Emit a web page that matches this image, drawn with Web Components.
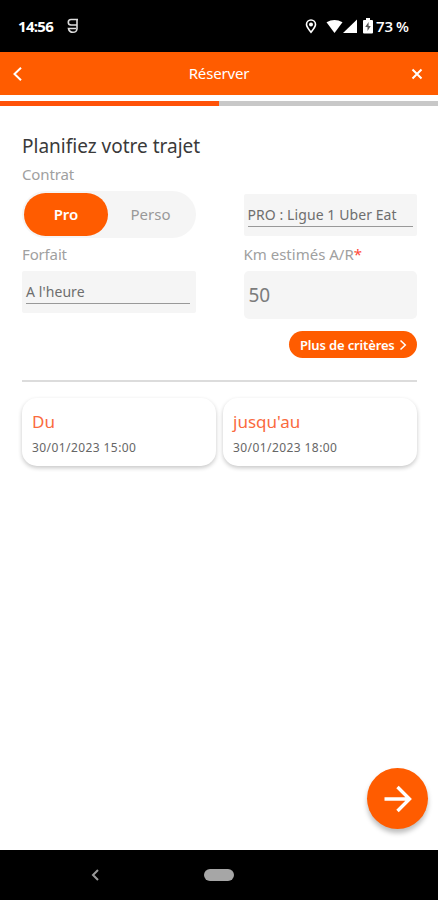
<!DOCTYPE html>
<html lang="fr">
<head>
<meta charset="utf-8">
<meta name="viewport" content="width=device-width, initial-scale=1">
<title>Réserver</title>
<style>
  body {
    margin: 0;
    background: #fff;
    font-family: "Noto Sans", "Open Sans", sans-serif;
    --orange: #ff5c00;
    --field: #f5f5f5;
    --label: #a0a0a0;
  }
</style>
</head>
<body>
<booking-app></booking-app>

<script>
const define = (name, html, setup) => {
  const $template = document.createElement("template");
  $template.innerHTML = html;
  window.customElements.define(name, class extends HTMLElement {
    constructor() {
      super();
      this.attachShadow({ mode: "open" });
      this.shadowRoot.appendChild($template.content.cloneNode(true));
    }
    connectedCallback() {
      if (setup) setup(this, this.shadowRoot);
    }
  });
};

// Android status bar
define("status-bar", /*html*/ `
  <style>
    :host {
      display: flex;
      align-items: center;
      box-sizing: border-box;
      height: 52px;
      padding: 0 29px 0 18px;
      background: #000;
      color: #fff;
      font: 700 15px/20px "Open Sans", sans-serif;
    }
    svg { display: block; fill: #fff; }
    .time { width: 37px; letter-spacing: -0.7px; white-space: nowrap; }
    .app { margin-left: 12px; }
    .right { display: flex; align-items: center; margin-left: auto; }
    .battery { font-weight: 600; white-space: nowrap; word-spacing: -1px; letter-spacing: 0; margin-left: 3px; }
  </style>
  <span class="time">14:56</span>
  <svg class="app" width="12" height="16" viewBox="0 0 12 16" style="fill:none;stroke:#ddd;stroke-width:1.6">
    <path d="M11 1.500H4Q1.300 1.500 1.300 4.200T4 7H10.500M10 1.500V11Q9.500 14.300 6 14.300Q2.200 14.300 1.500 10.500H9"/>
  </svg>
  <div class="right">
    <svg width="12" height="15" viewBox="0 0 12 15" style="fill:none;stroke:#fff;stroke-width:1.6">
      <path d="M6 13.2C3.4 10 1.5 7.8 1.5 5.5a4.5 4.5 0 0 1 9 0C10.500 7.800 8.600 10 6 13.200Z"/>
      <circle cx="6" cy="5.500" r="1.200" style="fill:#fff"/>
    </svg>
    <svg width="17" height="15" viewBox="0 0 17 15" style="margin-left:9px">
      <path d="M.5 3.200Q8.500-1.200 16.500 3.200L8.500 14Z"/>
    </svg>
    <svg width="14" height="15" viewBox="0 0 14 15">
      <path d="M14 .500V14H0Z"/>
    </svg>
    <svg width="10" height="16" viewBox="0 0 10 16" style="margin-left:6px">
      <path d="M3 0H7V2H9Q10 2 10 3V14.500Q10 15.500 9 15.500H1Q0 15.500 0 14.500V3Q0 2 1 2H3Z"/>
      <path d="M5.600 4L2.200 9H4.500V13L7.800 8H5.600Z" style="fill:#555"/>
    </svg>
    <span class="battery">73 %</span>
  </div>
`);

define("app-header", /*html*/ `
  <style>
    :host {
      display: flex;
      align-items: center;
      justify-content: space-between;
      height: 43px;
      padding: 0 15px 0 12px;
      background: var(--orange);
      color: #fff;
      font-size: 15px;
    }
    svg { display: block; fill: none; stroke: #fff; stroke-width: 2; }
    span { padding-left: 3px; letter-spacing: -0.15px; line-height: 20px; margin-top: -1px; }
  </style>
  <svg width="12" height="16" viewBox="0 0 12 16"><path d="M9 1.800L2.500 8L9 14.200"/></svg>
  <span><slot></slot></span>
  <svg width="12" height="12" viewBox="0 0 12 12"><path d="M1.500 1.500L10.500 10.500M10.500 1.500L1.500 10.500"/></svg>
`);

define("step-progress", /*html*/ `
  <style>
    :host { display: block; height: 5px; margin-top: 6px; background: #c8c8c8; }
    div { width: 50%; height: 100%; background: #ff5208; }
  </style>
  <div></div>
`);

define("form-label", /*html*/ `
  <style>
    :host {
      display: block;
      height: 20px;
      line-height: 19px;
      font-size: 15px;
      letter-spacing: -0.15px;
      color: var(--label);
      white-space: nowrap;
    }
    :host([required]) { letter-spacing: 0; }
    .required { color: #ff4a3a; }
  </style>
  <slot></slot><span class="required" hidden>*</span>
`, (host, root) => {
  root.querySelector(".required").hidden = !host.hasAttribute("required");
});

define("toggle-switch", /*html*/ `
  <style>
    :host {
      display: flex;
      box-sizing: border-box;
      height: 47px;
      padding: 2px;
      border-radius: 24px;
      background: var(--field);
      font-size: 15px;
      line-height: 43px;
      text-align: center;
      color: #999;
    }
    .on {
      width: 84px;
      border-radius: 22px;
      background: var(--orange);
      color: #fff;
      font-weight: 600;
    }
    .off { width: 85px; }
  </style>
  <div class="on"><slot name="on"></slot></div>
  <div class="off"><slot name="off"></slot></div>
`);

define("select-field", /*html*/ `
  <style>
    :host {
      display: block;
      box-sizing: border-box;
      height: 42px;
      padding: 9px 4px 0;
      border-radius: 2px;
      background: var(--field);
      font-size: 14px;
      letter-spacing: 0.08px;
      color: #6e6e6e;
    }
    div {
      height: 23px;
      line-height: 24px;
      border-bottom: 1px solid #999;
      white-space: nowrap;
    }
  </style>
  <div><slot></slot></div>
`);

define("number-field", /*html*/ `
  <style>
    :host {
      display: block;
      height: 48px;
      padding-left: 5px;
      border-radius: 5px;
      background: var(--field);
      font-size: 19px;
      line-height: 48px;
      color: #7c7c7c;
    }
  </style>
  <slot></slot>
`);

define("more-button", /*html*/ `
  <style>
    :host {
      display: flex;
      align-items: center;
      justify-content: space-between;
      align-self: flex-end;
      box-sizing: border-box;
      width: 128px;
      height: 27px;
      padding: 0 10px 0 11px;
      border-radius: 14px;
      background: var(--orange);
      color: #fff;
      font-size: 13px;
      font-weight: 600;
      white-space: nowrap;
    }
    svg { fill: none; stroke: #fff; stroke-width: 1.5; }
    span { letter-spacing: -0.15px; }
  </style>
  <span><slot></slot></span>
  <svg width="8" height="12" viewBox="0 0 8 12"><path d="M1.500 1.500L6.300 6L1.500 10.500"/></svg>
`);

define("date-card", /*html*/ `
  <style>
    :host {
      display: block;
      flex: 1;
      box-sizing: border-box;
      height: 68px;
      padding: 12px 10px 0;
      border-radius: 15px;
      background: #fff;
      box-shadow: 0 2px 4px rgba(0, 0, 0, 0.22);
    }
    .title { font-size: 17px; line-height: 24px; color: #fa6a3e; }
    .value {
      margin-top: 4px;
      font-size: 12px;
      line-height: 20px;
      letter-spacing: 0.42px;
      white-space: nowrap;
      color: #666;
    }
  </style>
  <div class="title"><slot name="title"></slot></div>
  <div class="value"><slot></slot></div>
`);

define("next-button", /*html*/ `
  <style>
    :host {
      display: flex;
      align-items: center;
      justify-content: center;
      width: 61px;
      height: 61px;
      border-radius: 50%;
      background: var(--orange);
      box-shadow: 0 4px 5px rgba(0, 0, 0, 0.26);
    }
    svg { fill: none; stroke: #fff; stroke-width: 3.400; }
  </style>
  <svg width="28" height="28" viewBox="0 0 28 28"><path d="M0.500 14H25.500M13.500 2L25.500 14L13.500 26"/></svg>
`);

// back chevron and home pill
define("nav-bar", /*html*/ `
  <style>
    :host {
      display: flex;
      align-items: center;
      height: 50px;
      padding-left: 91px;
      background: #000;
    }
    svg { fill: none; stroke: #999; stroke-width: 2; }
    div { width: 30px; height: 12px; margin-left: 105px; border-radius: 6px; background: #a6a6a6; }
  </style>
  <svg width="8" height="12" viewBox="0 0 8 12"><path d="M7 1L2 6L7 11"/></svg>
  <div></div>
`);

define("booking-app", /*html*/ `
  <style>
    :host { display: flex; flex-direction: column; height: 900px; }
    main { flex: 1; display: flex; flex-direction: column; padding: 27px 21px 0 22px; }
    h1 {
      margin: 0 0 6px;
      font-size: 19px;
      line-height: 26px;
      font-weight: 400;
      color: #3a3a3a;
      white-space: nowrap;
    }
    .cols { display: flex; gap: 48px; }
    .col { flex: 1; display: flex; flex-direction: column; }
    .left toggle-switch { margin: 6px 0 7px; }
    .left select-field { margin-top: 6px; padding-right: 6px; }
    .right select-field { margin: 29px 0 9px; }
    .right number-field { margin: 6px 0 12px; }
    .dates { display: flex; gap: 7px; margin-top: 16px; }
    hr { width: 100%; height: 2px; margin: 22px 0 0; border: 0; background: #dcdcdc; }
    next-button { margin: auto -11px 21px auto; }
  </style>
  <status-bar></status-bar>
  <app-header>Réserver</app-header>
  <step-progress></step-progress>
  <main>
    <h1>Planifiez votre trajet</h1>
    <div class="cols">
      <div class="col left">
        <form-label>Contrat</form-label>
        <toggle-switch><span slot="on">Pro</span><span slot="off">Perso</span></toggle-switch>
        <form-label>Forfait</form-label>
        <select-field>A l'heure</select-field>
      </div>
      <div class="col right">
        <select-field>PRO : Ligue 1 Uber Eat</select-field>
        <form-label required>Km estimés A/R</form-label>
        <number-field>50</number-field>
        <more-button>Plus de critères</more-button>
      </div>
    </div>
    <hr>
    <div class="dates">
      <date-card><span slot="title">Du</span>30/01/2023 15:00</date-card>
      <date-card><span slot="title">jusqu'au</span>30/01/2023 18:00</date-card>
    </div>
    <next-button></next-button>
  </main>
  <nav-bar></nav-bar>
`);
</script>
</body>
</html>
